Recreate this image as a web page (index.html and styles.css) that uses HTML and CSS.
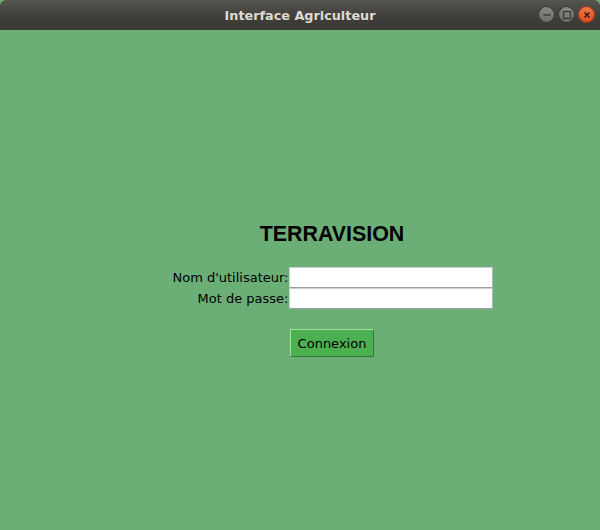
FILE: index.html
```html
<!DOCTYPE html>
<html lang="fr">
<head>
<meta charset="utf-8">
<title>Interface Agriculteur</title>
<link rel="stylesheet" href="styles.css">
</head>
<body>
<div class="window">
  <div class="titlebar">
    <span class="title">Interface Agriculteur</span>
    <div class="controls">
      <span class="ctl ctl-min"><svg width="16" height="16" viewBox="0 0 16 16"><path d="M4.5 8h7" stroke="#3a3935" stroke-width="1.4"/></svg></span>
      <span class="ctl ctl-max"><svg width="16" height="16" viewBox="0 0 16 16"><rect x="4.5" y="4.5" width="7" height="7" fill="none" stroke="#3a3935" stroke-width="1.3"/></svg></span>
      <span class="ctl ctl-close"><svg width="16" height="16" viewBox="0 0 16 16"><path d="M5.5 5.5l5 5M10.5 5.5l-5 5" stroke="#3a1a10" stroke-width="1.5"/></svg></span>
    </div>
  </div>
  <div class="content">
    <div class="form">
      <h1 class="brand">TERRAVISION</h1>
      <div class="fields">
        <label class="label" for="user">Nom d'utilisateur:</label>
        <input class="entry" id="user" type="text">
        <label class="label" for="pass">Mot de passe:</label>
        <input class="entry" id="pass" type="password">
      </div>
      <button class="btn" type="button">Connexion</button>
    </div>
  </div>
</div>
</body>
</html>
```
FILE: styles.css
```css
* { box-sizing: border-box; }
html, body { margin: 0; padding: 0; background: #6baf77; }
.window {
  width: 600px;
  height: 530px;
  display: flex;
  flex-direction: column;
  background: #6baf77;
  overflow: hidden;
}
.titlebar {
  height: 30px;
  flex: none;
  position: relative;
  display: flex;
  align-items: center;
  justify-content: center;
  background: linear-gradient(#56544f, #3e3d39 60%, #3a3935);
  border-radius: 6px 6px 0 0;
}
.title {
  font-family: "DejaVu Sans", sans-serif;
  font-weight: bold;
  font-size: 12.8px;
  color: #dfdbd2;
}
.controls {
  position: absolute;
  right: 5px;
  top: 6px;
  display: flex;
  gap: 3px;
}
.ctl {
  width: 17px;
  height: 17px;
  border-radius: 50%;
  display: flex;
  align-items: center;
  justify-content: center;
  background: linear-gradient(#8d8b85, #6c6a65);
  box-shadow: inset 0 0 0 1px #2f2e2b;
}
.ctl-close {
  background: linear-gradient(#f07a4a, #df4c1c);
  box-shadow: inset 0 0 0 1px #8a3414;
}
.content {
  flex: 1;
  display: flex;
  justify-content: center;
  padding: 192px 0 0 64px;
}
.form {
  display: flex;
  flex-direction: column;
  align-items: center;
}
.brand {
  margin: 0;
  font-family: "Liberation Sans", Arial, sans-serif;
  font-weight: bold;
  font-size: 21.4px;
  line-height: 24px;
  color: #000;
}
.fields {
  margin-top: 21px;
  display: grid;
  grid-template-columns: 117px 204px;
  grid-auto-rows: 21px;
}
.label {
  font-family: "DejaVu Sans", sans-serif;
  font-size: 13px;
  color: #000;
  display: flex;
  align-items: center;
  justify-content: flex-end;
  white-space: nowrap;
}
.entry {
  width: 204px;
  height: 21px;
  margin: 0;
  padding: 0 3px;
  background: #fff;
  border: 1px solid #d0d0d0;
  border-bottom-color: #9e9e9e;
  border-right-color: #b5b5b5;
  outline: none;
  font-family: "DejaVu Sans", sans-serif;
  font-size: 12px;
}
.btn {
  margin-top: 20px;
  width: 84px;
  height: 28px;
  padding: 0;
  background: #4caf50;
  border: 1px solid;
  border-color: #9be29b #2e7d32 #2e7d32 #9be29b;
  font-family: "DejaVu Sans", sans-serif;
  font-size: 13px;
  color: #000;
  cursor: pointer;
}
```
